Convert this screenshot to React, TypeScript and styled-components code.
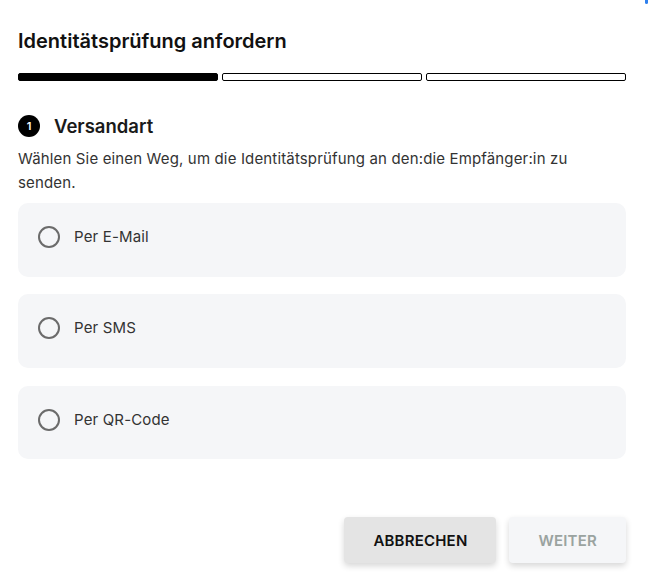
import * as React from 'react';
import styled, { createGlobalStyle } from 'styled-components';

const GlobalStyles = createGlobalStyle`
  html, body {
    margin: 0;
    background: #ffffff;
    font-family: Inter, "Noto Sans", sans-serif;
    color: #1a1a1a;
  }
`;

const Dialog = styled.div`
  position: relative;
  width: 649px;
  height: 587px;
  box-sizing: border-box;
  padding: 28px 23px 0 18px;
  display: flex;
  flex-direction: column;
`;

const FocusDot = styled.span`
  position: absolute;
  top: 0;
  right: 1px;
  width: 3px;
  height: 4px;
  border-radius: 0 0 2px 2px;
  background: #2f80ed;
`;

const Title = styled.h2`
  margin: 0;
  font-size: 20px;
  line-height: 26px;
  font-weight: 600;
  color: #111;
`;

const Progress = styled.div`
  display: grid;
  grid-template-columns: repeat(3, 1fr);
  gap: 4px;
  margin-top: 19px;
`;

const Segment = styled.div<{ $active?: boolean }>`
  height: 8px;
  box-sizing: border-box;
  border-radius: 2px;
  border: 1px solid #000;
  background: ${p => (p.$active ? '#000' : '#fff')};
`;

const StepHeader = styled.div`
  display: flex;
  align-items: center;
  gap: 14px;
  margin-top: 33px;
`;

const StepBadge = styled.span`
  width: 22px;
  height: 22px;
  border-radius: 50%;
  background: #000;
  color: #fff;
  font-size: 11px;
  font-weight: 600;
  display: flex;
  align-items: center;
  justify-content: center;
`;

const StepTitle = styled.h3`
  margin: 0;
  font-size: 18.5px;
  line-height: 24px;
  font-weight: 600;
  color: #1a1a1a;
`;

const Description = styled.p`
  margin: 9px 0 0;
  max-width: 580px;
  font-size: 15px;
  line-height: 24px;
  letter-spacing: 0.15px;
  color: #333;
`;

const Options = styled.div`
  display: flex;
  flex-direction: column;
  gap: 17.75px;
  margin-top: 8px;
`;

const Option = styled.label`
  display: flex;
  align-items: flex-start;
  gap: 14px;
  height: 73.5px;
  box-sizing: border-box;
  padding: 23px 20px 0;
  border-radius: 10px;
  background: #f5f6f8;
  cursor: pointer;
`;

const Radio = styled.span`
  width: 22px;
  height: 22px;
  box-sizing: border-box;
  border-radius: 50%;
  border: 2px solid #6b6b6b;
  background: transparent;
  flex-shrink: 0;
`;

const OptionLabel = styled.span`
  font-size: 15px;
  line-height: 22px;
  letter-spacing: 0.15px;
  color: #333;
`;

const Footer = styled.div`
  display: flex;
  justify-content: flex-end;
  gap: 13px;
  margin-top: 58px;
`;

const Button = styled.button<{ $variant: 'secondary' | 'disabled' }>`
  height: 46px;
  border: none;
  border-radius: 4px;
  font-family: Inter, "Noto Sans", sans-serif;
  font-size: 15px;
  font-weight: 600;
  letter-spacing: 0.2px;
  text-transform: uppercase;
  padding: 0 29px;
  box-shadow: 0 3px 6px rgba(0, 0, 0, 0.16);
  background: ${p => (p.$variant === 'secondary' ? '#e4e4e4' : '#f5f6f8')};
  color: ${p => (p.$variant === 'secondary' ? '#111' : '#9aa3a0')};
`;

const options = ['Per E-Mail', 'Per SMS', 'Per QR-Code'];

const App: React.FC = () => (
  <>
    <GlobalStyles />
    <Dialog>
      <FocusDot />
      <Title>Identitätsprüfung anfordern</Title>
      <Progress>
        <Segment $active />
        <Segment />
        <Segment />
      </Progress>
      <StepHeader>
        <StepBadge>1</StepBadge>
        <StepTitle>Versandart</StepTitle>
      </StepHeader>
      <Description>
        Wählen Sie einen Weg, um die Identitätsprüfung an den:die Empfänger:in zu senden.
      </Description>
      <Options>
        {options.map(o => (
          <Option key={o}>
            <Radio />
            <OptionLabel>{o}</OptionLabel>
          </Option>
        ))}
      </Options>
      <Footer>
        <Button $variant="secondary">Abbrechen</Button>
        <Button $variant="disabled" disabled>Weiter</Button>
      </Footer>
    </Dialog>
  </>
);

export default App;
